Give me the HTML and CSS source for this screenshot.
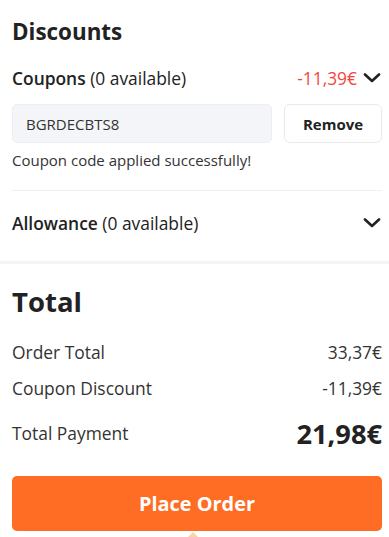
FILE: index.html
```
<!DOCTYPE html>
<html>
<head>
<meta charset="utf-8">
<link rel="stylesheet" href="styles.css">
</head>
<body>
<div class="page">
  <h2 class="h-discounts">Discounts</h2>
  <div class="row coupons">
    <div class="label"><span class="strong">Coupons</span> (0 available)</div>
    <div class="right">
      <span class="red">-11,39€</span>
      <svg class="chev" width="18" height="10" viewBox="0 0 18 10"><path d="M2 1.5 L9 8 L16 1.5" fill="none" stroke="#222" stroke-width="2.6" stroke-linecap="round" stroke-linejoin="round"/></svg>
    </div>
  </div>
  <div class="form">
    <div class="code">BGRDECBTS8</div>
    <button class="remove">Remove</button>
  </div>
  <div class="success">Coupon code applied successfully!</div>
  <div class="divider"></div>
  <div class="row allowance">
    <div class="label"><span class="strong">Allowance</span> (0 available)</div>
    <svg class="chev" width="18" height="10" viewBox="0 0 18 10"><path d="M2 1.5 L9 8 L16 1.5" fill="none" stroke="#222" stroke-width="2.6" stroke-linecap="round" stroke-linejoin="round"/></svg>
  </div>
  <div class="band"></div>
  <h2 class="h-total">Total</h2>
  <div class="line l1"><span>Order Total</span><span>33,37€</span></div>
  <div class="line l2"><span>Coupon Discount</span><span>-11,39€</span></div>
  <div class="line pay"><span>Total Payment</span><span class="big">21,98€</span></div>
  <button class="place">Place Order</button>
  <div class="tip"></div>
</div>
</body>
</html>
```
FILE: styles.css
```
html, body { margin: 0; padding: 0; background: #fff; }
body { font-family: "Open Sans", "Noto Sans", sans-serif; color: #222; }
.page { padding: 16px 7px 0 12px; overflow: hidden; height: 537px; box-sizing: border-box; }
h2 { margin: 0; font-weight: 700; }
.h-discounts { font-size: 22.4px; height: 31px; line-height: 31px; }
.row { display: flex; justify-content: space-between; align-items: center; height: 32px; font-size: 17.4px; }
.coupons { margin-top: 15px; }
.strong { font-weight: 600; }
.right { display: flex; align-items: center; gap: 6px; }
.red { color: #f5453f; }
.chev { display: block; margin-right: 1px; }
.form { display: flex; gap: 12px; margin-top: 10px; height: 39px; }
.code { flex: 1; background: #f3f5f8; border: 1px solid #eceef2; border-radius: 5px; font-size: 15px; display: flex; align-items: center; padding-left: 13px; color: #333; }
.remove { width: 98px; border: 1px solid #e7e9ed; border-radius: 6px; background: #fff; font-family: inherit; font-size: 15px; font-weight: 700; color: #222; padding: 0; }
.success { font-size: 15px; height: 18px; line-height: 18px; margin-top: 8px; color: #333; }
.divider { height: 1px; background: #eeeff1; margin-top: 21px; }
.allowance { margin-top: 16px; }
.band { height: 3px; background: #f4f5f8; margin: 22px -7px 0 -12px; }
.h-total { font-size: 27.5px; height: 38px; line-height: 38px; margin-top: 19px; }
.line { display: flex; justify-content: space-between; align-items: center; font-size: 17.4px; height: 24px; color: #333; }
.l1 { margin-top: 19px; }
.l2 { margin-top: 12px; }
.pay { margin-top: 14px; height: 38px; }
.big { font-size: 27.2px; font-weight: 700; color: #222; }
.place { display: block; width: 100%; height: 55px; margin-top: 24px; background: #ff6d24; border: none; border-radius: 5px; color: #fff; font-family: inherit; font-size: 19.9px; font-weight: 700; padding: 0; }
.tip { width: 0; height: 0; margin: 1px auto 0; border-left: 5px solid transparent; border-right: 5px solid transparent; border-bottom: 5px solid #fbd3a6; position: relative; left: -4px; }
```
